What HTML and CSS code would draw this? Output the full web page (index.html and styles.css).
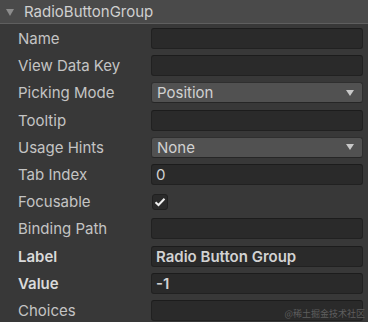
FILE: index.html
```html
<!DOCTYPE html>
<html>
<head>
<meta charset="utf-8">
<link rel="stylesheet" href="styles.css">
</head>
<body>
<div class="inspector">
  <div class="header">
    <span class="foldout"></span>
    <span class="title">RadioButtonGroup</span>
  </div>
  <div class="rows">
    <div class="row"><span class="label">Name</span><div class="field"></div></div>
    <div class="row"><span class="label">View Data Key</span><div class="field"></div></div>
    <div class="row"><span class="label">Picking Mode</span><div class="dropdown"><span>Position</span><span class="arrow"></span></div></div>
    <div class="row"><span class="label">Tooltip</span><div class="field"></div></div>
    <div class="row"><span class="label">Usage Hints</span><div class="dropdown"><span>None</span><span class="arrow"></span></div></div>
    <div class="row"><span class="label">Tab Index</span><div class="field">0</div></div>
    <div class="row"><span class="label">Focusable</span><div class="toggle-wrap"><span class="checkbox"><svg width="12" height="10" viewBox="0 0 12 10"><path d="M1.5 5.2 L4.5 8 L10.5 1.8" fill="none" stroke="#f0f0f0" stroke-width="2"/></svg></span></div></div>
    <div class="row"><span class="label">Binding Path</span><div class="field"></div></div>
    <div class="row"><span class="label bold">Label</span><div class="field bold">Radio Button Group</div></div>
    <div class="row"><span class="label bold">Value</span><div class="field bold">-1</div></div>
    <div class="row"><span class="label">Choices</span><div class="field"></div></div>
  </div>
  <div class="watermark">@稀土掘金技术社区</div>
</div>
</body>
</html>
```
FILE: styles.css
```css
html, body {
  margin: 0;
  padding: 0;
  background: #383838;
}
body {
  width: 368px;
  height: 322px;
  overflow: hidden;
  font-family: Inter, "Noto Sans", sans-serif;
  font-size: 15px;
  color: #c4c4c4;
}
.inspector {
  position: relative;
  height: 322px;
}
.header {
  height: 23px;
  background: #4a4a4a;
  border-bottom: 1px solid #5f5f5f;
  display: flex;
  align-items: center;
  padding-left: 6px;
}
.foldout {
  width: 0;
  height: 0;
  border-left: 4.5px solid transparent;
  border-right: 4.5px solid transparent;
  border-top: 7px solid #8c8c8c;
  margin-right: 10px;
  margin-top: 1px;
}
.title {
  font-size: 15px;
  color: #d0d0d0;
}
.rows {
  padding: 4px 5px 0 18px;
  display: flex;
  flex-direction: column;
  gap: 6.2px;
}
.row {
  display: flex;
  align-items: center;
  height: 21px;
}
.label {
  width: 133px;
  flex: none;
  white-space: nowrap;
}
.bold {
  font-weight: 600;
  color: #dadada;
}
.field {
  flex: 1;
  height: 21px;
  box-sizing: border-box;
  background: #2a2a2a;
  border: 1px solid #212121;
  border-top-color: #1c1c1c;
  border-radius: 3px;
  padding-left: 4px;
  display: flex;
  align-items: center;
  color: #d2d2d2;
}
.dropdown {
  flex: 1;
  height: 21px;
  box-sizing: border-box;
  background: #515151;
  border: 1px solid #2f2f2f;
  border-bottom-color: #262626;
  border-radius: 3px;
  padding: 0 8px 0 5px;
  display: flex;
  align-items: center;
  justify-content: space-between;
  color: #d2d2d2;
}
.arrow {
  width: 0;
  height: 0;
  border-left: 4.5px solid transparent;
  border-right: 4.5px solid transparent;
  border-top: 6px solid #c8c8c8;
}
.toggle-wrap {
  flex: 1;
  display: flex;
  align-items: center;
  padding-left: 1px;
}
.checkbox {
  width: 16px;
  height: 16px;
  box-sizing: border-box;
  background: #2a2a2a;
  border: 1px solid #202020;
  border-radius: 3px;
  display: flex;
  align-items: center;
  justify-content: center;
}
.watermark {
  position: absolute;
  right: 3px;
  bottom: 2px;
  font-family: "Noto Sans CJK SC", sans-serif;
  font-size: 9px;
  color: #5e5e5e;
}
```
